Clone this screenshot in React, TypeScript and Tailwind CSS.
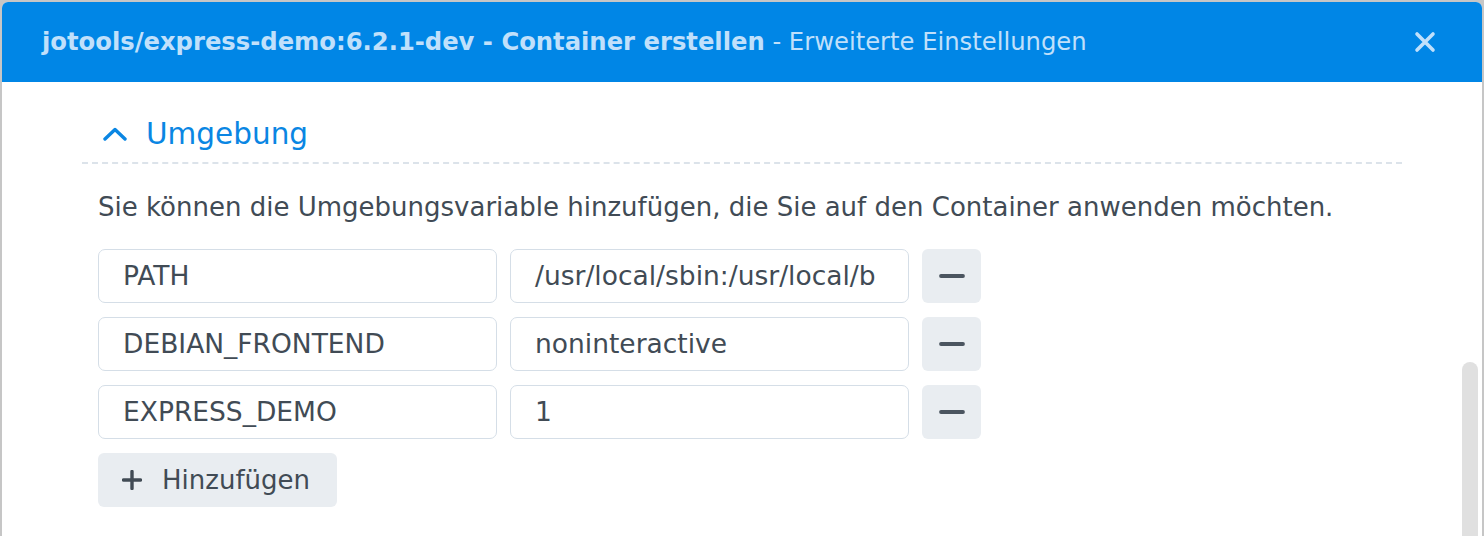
const rows = [
  { name: "PATH", value: "/usr/local/sbin:/usr/local/b" },
  { name: "DEBIAN_FRONTEND", value: "noninteractive" },
  { name: "EXPRESS_DEMO", value: "1" },
]

function CloseIcon() {
  return (
    <svg width="22" height="22" viewBox="0 0 22 22" fill="none">
      <path d="M3 3L19 19M19 3L3 19" stroke="#c0e0fb" strokeWidth="3.6" strokeLinecap="round" />
    </svg>
  )
}

function ChevronUp() {
  return (
    <svg width="24" height="14" viewBox="0 0 24 14" fill="none">
      <path d="M2 12L12 2.5L22 12" stroke="#0a86e3" strokeWidth="3.4" strokeLinecap="round" strokeLinejoin="round" />
    </svg>
  )
}

function MinusIcon() {
  return (
    <svg width="26" height="6" viewBox="0 0 26 6" fill="none">
      <path d="M2 3H24" stroke="#4b5560" strokeWidth="3.8" strokeLinecap="round" />
    </svg>
  )
}

function PlusIcon() {
  return (
    <svg width="20" height="20" viewBox="0 0 20 20" fill="none">
      <path d="M10 1.5V18.5M1.5 10H18.5" stroke="#414b55" strokeWidth="3.4" strokeLinecap="round" />
    </svg>
  )
}

export default function App() {
  return (
    <div className="w-[1484px] h-[536px] bg-[#c6c6c6] pt-[2px] pl-[2px] pr-[2px] overflow-hidden font-['DejaVu_Sans',Verdana,sans-serif]">
      <div className="h-full bg-white rounded-t-[6px] flex flex-col overflow-hidden">
        <div className="h-[80px] shrink-0 bg-[#0086e6] flex items-center justify-between pl-[40px] pr-[46px]">
          <div className="text-[24.25px] text-[#c0e0fb] whitespace-nowrap">
            <span className="font-bold">jotools/express-demo:6.2.1-dev - Container erstellen</span>
            <span> - Erweiterte Einstellungen</span>
          </div>
          <CloseIcon />
        </div>

        <div className="relative flex-1">
          <div className="ml-[80px] w-[1320px]">
            <div className="flex items-center gap-[19px] pl-[21px] pt-[34px] pb-[10px] border-b-2 border-dashed border-[#dce3ea]">
              <ChevronUp />
              <span className="text-[29.5px] leading-[36px] text-[#0a86e3]">Umgebung</span>
            </div>

            <div className="pl-[16px] pt-[28px]">
              <p className="text-[26px] leading-[30px] text-[#414b55] whitespace-nowrap">
                Sie können die Umgebungsvariable hinzufügen, die Sie auf den Container anwenden möchten.
              </p>

              <div className="mt-[27px] flex flex-col gap-[14px]">
                {rows.map((r) => (
                  <div key={r.name} className="flex gap-[13px]">
                    <div className="w-[399px] h-[54px] rounded-[7px] border border-[#d5dee7] px-[24px] flex items-center overflow-hidden">
                      <span className="text-[26.5px] text-[#414b55] whitespace-nowrap">{r.name}</span>
                    </div>
                    <div className="w-[399px] h-[54px] rounded-[7px] border border-[#d5dee7] px-[24px] flex items-center overflow-hidden">
                      <span className="text-[26.5px] text-[#414b55] whitespace-nowrap">{r.value}</span>
                    </div>
                    <div className="w-[59px] h-[54px] rounded-[6px] bg-[#e9edf1] flex items-center justify-center">
                      <MinusIcon />
                    </div>
                  </div>
                ))}

                <div className="w-[239px] h-[54px] rounded-[6px] bg-[#e9edf1] flex items-center gap-[20px] pl-[24px]">
                  <PlusIcon />
                  <span className="text-[26px] text-[#414b55]">Hinzufügen</span>
                </div>
              </div>
            </div>
          </div>

          <div className="absolute left-[1460px] top-[280px] bottom-0 w-[16px] rounded-t-full bg-[#e0e0e0]" />
        </div>
      </div>
    </div>
  )
}
